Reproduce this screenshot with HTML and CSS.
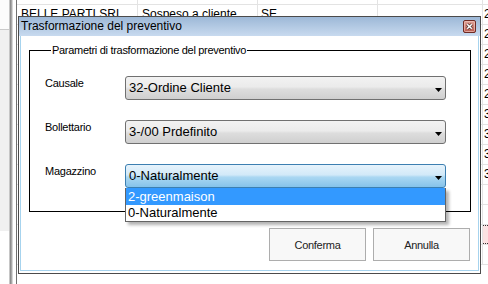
FILE: index.html
```html
<!DOCTYPE html>
<html>
<head>
<meta charset="utf-8">
<title>Trasformazione del preventivo</title>
<link rel="stylesheet" href="styles.css">
</head>
<body>
<div class="desk">
  <div class="side"><div class="side-top"></div><div class="side-mid"></div></div>
  <div class="splitter"></div>
  <div class="grid">
    <div class="row head"><div class="c c1"></div><div class="c c2"></div><div class="c c3"></div><div class="c c4"></div><div class="c c5"></div></div>
    <div class="row"><div class="c c1">BELLE PARTI SRL</div><div class="c c2">Sospeso a cliente</div><div class="c c3">SE</div><div class="c c4"></div><div class="c c5">2</div></div>
    <div class="row"><div class="c c1"></div><div class="c c2"></div><div class="c c3"></div><div class="c c4"></div><div class="c c5">2</div></div>
    <div class="row"><div class="c c1"></div><div class="c c2"></div><div class="c c3"></div><div class="c c4"></div><div class="c c5">2</div></div>
    <div class="row"><div class="c c1"></div><div class="c c2"></div><div class="c c3"></div><div class="c c4"></div><div class="c c5">2</div></div>
    <div class="row"><div class="c c1"></div><div class="c c2"></div><div class="c c3"></div><div class="c c4"></div><div class="c c5">2</div></div>
    <div class="row"><div class="c c1"></div><div class="c c2"></div><div class="c c3"></div><div class="c c4"></div><div class="c c5">3</div></div>
    <div class="row"><div class="c c1"></div><div class="c c2"></div><div class="c c3"></div><div class="c c4"></div><div class="c c5">3</div></div>
    <div class="row"><div class="c c1"></div><div class="c c2"></div><div class="c c3"></div><div class="c c4"></div><div class="c c5">3</div></div>
    <div class="row"><div class="c c1"></div><div class="c c2"></div><div class="c c3"></div><div class="c c4"></div><div class="c c5">3</div></div>
    <div class="row"><div class="c c1"></div><div class="c c2"></div><div class="c c3"></div><div class="c c4"></div><div class="c c5"></div></div>
    <div class="row"><div class="c c1"></div><div class="c c2"></div><div class="c c3"></div><div class="c c4"></div><div class="c c5"></div></div>
    <div class="row sel"><div class="c c1"></div><div class="c c2"></div><div class="c c3"></div><div class="c c4"></div><div class="c c5"></div></div>
    <div class="row"><div class="c c1"></div><div class="c c2"></div><div class="c c3"></div><div class="c c4"></div><div class="c c5"></div></div>
  </div>
</div>

<div class="dialog">
  <div class="titlebar">
    <span class="title">Trasformazione del preventivo</span>
    <svg class="close" width="13" height="13" viewBox="0 0 13 13">
      <defs>
        <linearGradient id="cg" x1="0" y1="0" x2="0" y2="1">
          <stop offset="0" stop-color="#e2a79d"/>
          <stop offset="1" stop-color="#b8564a"/>
        </linearGradient>
      </defs>
      <rect x="0.5" y="0.5" width="12" height="12" rx="1.5" fill="url(#cg)" stroke="#6e2b24"/>
      <rect x="1.5" y="1.5" width="10" height="10" rx="1" fill="none" stroke="#f0c4bc" stroke-opacity="0.7"/>
      <path d="M4.2 4.2 L8.8 8.8 M8.8 4.2 L4.2 8.8" stroke="#4f3431" stroke-width="3"/>
      <path d="M4.2 4.2 L8.8 8.8 M8.8 4.2 L4.2 8.8" stroke="#ffffff" stroke-width="1.5"/>
    </svg>
  </div>
  <div class="body">
    <div class="client">
      <fieldset class="group">
        <legend>Parametri di trasformazione del preventivo</legend>
        <div class="field">
          <span class="label">Causale</span>
          <div class="combo"><span class="value">32-Ordine Cliente</span><svg class="arrow" width="7" height="4" viewBox="0 0 7 4"><path d="M0 0H7L3.5 4Z" fill="#000"/></svg></div>
        </div>
        <div class="field">
          <span class="label">Bollettario</span>
          <div class="combo"><span class="value">3-/00 Prdefinito</span><svg class="arrow" width="7" height="4" viewBox="0 0 7 4"><path d="M0 0H7L3.5 4Z" fill="#000"/></svg></div>
        </div>
        <div class="field">
          <span class="label">Magazzino</span>
          <div class="combo focus"><span class="value">0-Naturalmente</span><svg class="arrow" width="7" height="4" viewBox="0 0 7 4"><path d="M0 0H7L3.5 4Z" fill="#000"/></svg>
            <ul class="list">
              <li class="item selected">2-greenmaison</li>
              <li class="item">0-Naturalmente</li>
            </ul>
          </div>
        </div>
      </fieldset>
      <div class="buttons">
        <button class="btn">Conferma</button>
        <button class="btn">Annulla</button>
      </div>
    </div>
  </div>
</div>
</body>
</html>
```

FILE: styles.css
```css
* { box-sizing: border-box; }
html, body { margin: 0; padding: 0; }
body {
  width: 488px;
  height: 284px;
  overflow: hidden;
  position: relative;
  background: #fff;
  font-family: "Liberation Sans", Arial, sans-serif;
  color: #000;
}

/* background application */
.desk { display: flex; height: 284px; }
.side { width: 9px; flex: none; display: flex; flex-direction: column; }
.side-top { height: 30px; background: #fcfcfc; border-bottom: 1px solid #cacaca; }
.side-mid { height: 201px; background: #f0f0f0; }
.splitter {
  width: 8px;
  flex: none;
  background: linear-gradient(to right,
    #c6c6c6 0 1px, #8e8e8e 1px 2px, #a8a8a8 2px 3px, #d6d6d6 3px 4px,
    #ffffff 4px 7px, #6f6f6f 7px 8px);
}
.grid { flex: 1; overflow: hidden; }
.row { display: flex; height: 20px; border-bottom: 1px solid #e3e3e3; }
.row.head { height: 5px; }
.c {
  height: 100%;
  border-right: 1px solid #e3e3e3;
  font-size: 12px;
  line-height: 19px;
  padding-left: 4px;
  white-space: nowrap;
  overflow: hidden;
}
.c1 { width: 121px; }
.c2 { width: 120px; }
.c3 { width: 120px; padding-left: 3px; }
.c4 { width: 105px; }
.c5 { flex: 1; border-right: none; padding-left: 1px; }
.row.sel .c5 {
  background: #fbe2e2;
  border-top: 1px dotted #333;
  border-bottom: 1px dotted #333;
}

/* dialog window */
.dialog {
  position: absolute;
  left: 18px;
  top: 16px;
  width: 463px;
  height: 258px;
  border: 1px solid #4b4b4b;
  background: #fff;
  display: flex;
  flex-direction: column;
}
.titlebar {
  height: 19px;
  flex: none;
  display: flex;
  align-items: center;
  justify-content: space-between;
  padding: 0 4px 0 2px;
  background: linear-gradient(#9db8d7, #c8daef);
}
.title { font-size: 12px; line-height: 19px; }
.close { display: block; }
.body { flex: 1; display: flex; padding: 0 1px 2px 1px; }
.client {
  flex: 1;
  border: 1px solid #a6d3ee;
  border-top: none;
  display: flex;
  flex-direction: column;
}

.group {
  margin: 7px 7px 0 8px;
  padding: 19px 0 23px 15px;
  border: 1px solid #000;
  min-width: 0;
}
.group legend {
  font-size: 11px;
  line-height: 14px;
  letter-spacing: -0.3px;
  padding: 0 1px;
  margin-left: 6px;
}
.field { display: flex; align-items: flex-start; }
.field + .field { margin-top: 20px; }
.label {
  width: 80px;
  font-size: 11px;
  line-height: 14px;
  letter-spacing: -0.25px;
}
.combo {
  position: relative;
  width: 321px;
  height: 24px;
  border: 1px solid #707070;
  border-radius: 3px;
  padding: 0 3px 0 3px;
  display: flex;
  align-items: center;
  justify-content: space-between;
  font-size: 13px;
  background: linear-gradient(#f2f2f2 0%, #ebebeb 45%, #dddddd 55%, #cfcfcf 100%);
}
.combo.focus {
  border-color: #3c7fb1;
  background: linear-gradient(#e6f3fc 0%, #d2e9f8 45%, #aad7f2 55%, #86c3ea 100%);
}
.value { line-height: 22px; }
.arrow { display: block; margin-top: 3px; }

.list {
  position: absolute;
  top: calc(100% + 1px);
  left: -1px;
  width: 321px;
  margin: 0;
  padding: 0;
  list-style: none;
  background: #fff;
  border: 1px solid #646464;
  border-top: none;
  box-shadow: 3px 3px 3px rgba(0, 0, 0, 0.3);
}
.item { font-size: 13px; line-height: 16px; padding-left: 2px; }
.item.selected { line-height: 17px; background: #3399ff; color: #fff; }

.buttons {
  display: flex;
  justify-content: flex-end;
  gap: 7px;
  margin: 16px 8px 0 0;
}
.btn {
  width: 97px;
  height: 33px;
  border: 1px solid #adadad;
  background: #f8f8f8;
  font-family: "Liberation Sans", Arial, sans-serif;
  font-size: 11px;
  letter-spacing: -0.3px;
  color: #222;
  padding: 0;
  border-radius: 0;
}
```
